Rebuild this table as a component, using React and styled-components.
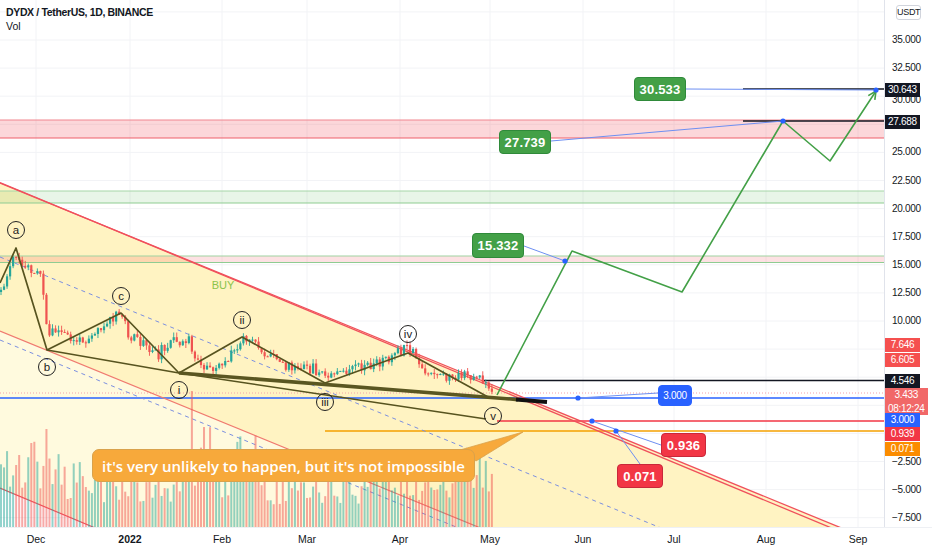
import React from 'react';
import styled, { createGlobalStyle } from 'styled-components';

const PLOT_W = 884;
const PLOT_H = 527;
const STEP = 3.03;

const priceY = (p) => 40 + (35 - p) * 11.24;

const GlobalStyle = createGlobalStyle`
  html, body {
    margin: 0;
    padding: 0;
    background: #ffffff;
  }
  body {
    font-family: "Liberation Sans", Arial, sans-serif;
    color: #131722;
  }
`;

const Frame = styled.div`
  width: 932px;
  height: 550px;
  display: flex;
  flex-direction: column;
  overflow: hidden;
  background: #fff;
`;

const ChartRow = styled.div`
  display: flex;
  height: ${PLOT_H}px;
`;

const Plot = styled.div`
  position: relative;
  width: ${PLOT_W}px;
  height: 100%;
  overflow: hidden;
`;

const Canvas = styled.svg`
  display: block;
`;

const Legend = styled.div`
  position: absolute;
  top: 6px;
  left: 6px;
  display: flex;
  flex-direction: column;
  gap: 1px;
  font-size: 10.5px;
  line-height: 13px;
  color: #131722;
`;

const LegendTitle = styled.span`
  font-weight: 700;
  letter-spacing: -0.35px;
`;

const Badge = styled.div`
  position: absolute;
  box-sizing: border-box;
  display: flex;
  align-items: center;
  justify-content: center;
  border-radius: 4px;
  color: #fff;
  font-weight: ${(p) => (p.$thin ? 400 : 700)};
  font-size: ${(p) => (p.$thin ? '10px' : '13px')};
  background: ${(p) => p.$bg};
  border: 1px solid ${(p) => p.$edge};
  letter-spacing: ${(p) => (p.$thin ? '-0.3px' : '0.2px')};
`;

const Callout = styled.div`
  position: absolute;
  left: 92px;
  top: 449px;
  width: 383px;
  height: 33px;
  box-sizing: border-box;
  display: flex;
  align-items: center;
  justify-content: center;
  background: #f7a93b;
  border: 1px solid #d9a24c;
  border-radius: 7px;
  color: #fff;
  font-family: "Open Sans", "Liberation Sans", sans-serif;
  font-size: 15px;
  font-weight: 600;
`;

const PriceAxis = styled.div`
  position: relative;
  flex: 1;
  border-left: 1px solid #e0e3eb;
  font-size: 10px;
  letter-spacing: -0.3px;
`;

const Tick = styled.span`
  position: absolute;
  left: 7px;
  line-height: 12px;
  transform: translateY(-50%);
  color: #131722;
`;

const AxisTag = styled.div`
  position: absolute;
  left: 0;
  box-sizing: border-box;
  padding: 0 3px;
  min-width: 35px;
  line-height: 13.5px;
  color: #fff;
  text-align: center;
  background: ${(p) => p.$bg};
`;

const UnitButton = styled.div`
  position: absolute;
  top: 5px;
  left: 11px;
  width: 25px;
  height: 15px;
  box-sizing: border-box;
  border: 1px solid #d1d4dc;
  border-radius: 3px;
  background: #fff;
  font-size: 9px;
  line-height: 13px;
  text-align: center;
  color: #131722;
`;

const TimeAxis = styled.div`
  position: relative;
  flex: 1;
  border-top: 1px solid #eef0f4;
  font-size: 10.5px;
`;

const TimeTick = styled.span`
  position: absolute;
  top: 5px;
  transform: translateX(-50%);
  font-weight: ${(p) => (p.$strong ? 700 : 400)};
  color: #131722;
`;

// ---- data ----

function seeded(seed) {
  let a = seed;
  return () => {
    a = (a + 0x6d2b79f5) | 0;
    let t = Math.imul(a ^ (a >>> 15), 1 | a);
    t = (t + Math.imul(t ^ (t >>> 7), 61 | t)) ^ t;
    return ((t ^ (t >>> 14)) >>> 0) / 4294967296;
  };
}

const pricePath = [
  [0, 292], [6, 278], [12, 262], [17, 255], [22, 268], [28, 262], [34, 275], [40, 268],
  [44, 300], [48, 340], [52, 330], [60, 332], [70, 338], [80, 342], [90, 335], [100, 328],
  [110, 322], [118, 315], [124, 318], [130, 338], [140, 342], [150, 350], [158, 355],
  [165, 345], [172, 340], [180, 348], [186, 342], [190, 333], [194, 362], [205, 368],
  [215, 366], [225, 362], [235, 352], [242, 340], [250, 342], [260, 350], [272, 358],
  [285, 365], [300, 370], [312, 368], [325, 378], [335, 376], [350, 370], [365, 368],
  [380, 362], [395, 355], [405, 350], [412, 352], [420, 366], [430, 376], [445, 377],
  [460, 377], [475, 376], [482, 380], [488, 392], [495, 392],
];

function along(x) {
  for (let i = 1; i < pricePath.length; i++) {
    const [x1, y1] = pricePath[i];
    const [x0, y0] = pricePath[i - 1];
    if (x <= x1) return y0 + ((y1 - y0) * (x - x0)) / (x1 - x0);
  }
  return pricePath[pricePath.length - 1][1];
}

function volumeBase(x) {
  if (x < 20) return 80;
  if (x < 60) return 90;
  if (x < 120) return 62;
  if (x < 185) return 55;
  if (x < 215) return 100;
  if (x < 235) return 62;
  if (x < 260) return 92;
  if (x < 370) return 55;
  if (x < 410) return 78;
  if (x < 470) return 55;
  return 78;
}

function buildCandles() {
  const rnd = seeded(11);
  const list = [];
  let prev = along(0);
  for (let i = 0; i < 163; i++) {
    const x = 1 + i * STEP;
    const close = along(x) + (rnd() - 0.5) * 11;
    const open = prev;
    const top = Math.min(open, close) - rnd() * 5;
    const bottom = Math.max(open, close) + rnd() * 5;
    let vol = volumeBase(x) * (0.4 + 0.65 * rnd());
    if (Math.abs(x - 192) < 1.6) vol = 136;
    if (Math.abs(x - 46) < 1.6) vol = 98;
    list.push({ x, open, close, top, bottom, rise: close < open, vol });
    prev = close;
  }
  return list;
}

const candles = buildCandles();

// labels that sit under a price tag or the unit button are left out
const priceTicks = [35, 32.5, 30, 25, 22.5, 20, 17.5, 15, 12.5, 10, -2.5, -5, -7.5];
const gridPrices = [37.5, 35, 32.5, 30, 27.5, 25, 22.5, 20, 17.5, 15, 12.5, 10, 7.5, 5, 2.5, 0, -2.5, -5, -7.5];

const fmt = (p) => {
  const txt = Math.abs(p).toFixed(3);
  return p < 0 ? `\u2212${txt}` : txt;
};

const axisTags = [
  { top: 83, bg: '#131722', text: ['30.643'] },
  { top: 115, bg: '#131722', text: ['27.688'] },
  { top: 338, bg: '#f5504f', text: ['7.646'] },
  { top: 353, bg: '#f5504f', text: ['6.605'] },
  { top: 374, bg: '#131722', text: ['4.546'] },
  { top: 388, bg: '#f16868', text: ['3.433', '08:12:24'] },
  { top: 413, bg: '#2962ff', text: ['3.000'] },
  { top: 427, bg: '#f23645', text: ['0.939'] },
  { top: 442, bg: '#fb8c00', text: ['0.071'] },
];

const months = [
  { x: 36, label: 'Dec' },
  { x: 130, label: '2022', strong: true },
  { x: 222, label: 'Feb' },
  { x: 307, label: 'Mar' },
  { x: 400, label: 'Apr' },
  { x: 490, label: 'May' },
  { x: 583, label: 'Jun' },
  { x: 674, label: 'Jul' },
  { x: 766, label: 'Aug' },
  { x: 858, label: 'Sep' },
];

const waveMarks = [
  { x: 16, y: 230, t: 'a' },
  { x: 47, y: 367, t: 'b' },
  { x: 121, y: 296, t: 'c' },
  { x: 179, y: 390, t: 'i' },
  { x: 242, y: 320, t: 'ii' },
  { x: 325, y: 402, t: 'iii' },
  { x: 408, y: 334, t: 'iv' },
  { x: 493, y: 416, t: 'v' },
];

const badges = [
  { left: 634, top: 77, w: 52, h: 24, bg: '#43a047', edge: '#2f8a3a', text: '30.533' },
  { left: 499, top: 130, w: 52, h: 24, bg: '#43a047', edge: '#2f8a3a', text: '27.739' },
  { left: 472, top: 233, w: 52, h: 25, bg: '#43a047', edge: '#2f8a3a', text: '15.332' },
  { left: 658, top: 385, w: 34, h: 21, bg: '#2962ff', edge: '#2962ff', text: '3.000', thin: true },
  { left: 661, top: 433, w: 45, h: 24, bg: '#f23645', edge: '#c9283a', text: '0.936' },
  { left: 617, top: 464, w: 46, h: 24, bg: '#f23645', edge: '#c9283a', text: '0.071' },
];

const pointers = [
  [686, 89, 876, 90],
  [551, 141, 783, 121],
  [524, 246, 565, 261],
  [578, 398, 658, 393],
  [592, 421, 661, 445],
  [616, 431, 640, 464],
];

const anchors = [[876, 90], [783, 121], [565, 261], [578, 398], [592, 421], [616, 431]];

const projection = [[497, 395], [572, 251], [682, 292], [783, 121], [830, 161], [876, 91]];

const lineY = (y0, slope) => `M0 ${y0} L${PLOT_W} ${y0 + slope * PLOT_W}`;

function arrowHead([x0, y0], [x1, y1], len = 9) {
  const a = Math.atan2(y1 - y0, x1 - x0);
  const l = [x1 - len * Math.cos(a - 0.45), y1 - len * Math.sin(a - 0.45)];
  const r = [x1 - len * Math.cos(a + 0.45), y1 - len * Math.sin(a + 0.45)];
  return `M${l[0]} ${l[1]} L${x1} ${y1} L${r[0]} ${r[1]}`;
}

function ChartDrawing() {
  const wave = 'M0 283 L16 248 L47 350 L121 313 L179 373 L242 337 L325 383 L408 353 L488 397';
  const proj = projection.map((p, i) => `${i ? 'L' : 'M'}${p[0]} ${p[1]}`).join(' ');
  return (
    <Canvas width={PLOT_W} height={PLOT_H} viewBox={`0 0 ${PLOT_W} ${PLOT_H}`}>
      {gridPrices.map((p) => (
        <line key={p} x1="0" x2={PLOT_W} y1={priceY(p)} y2={priceY(p)} stroke="#f2f3f6" />
      ))}
      {months.map((m) => (
        <line key={m.label} x1={m.x} x2={m.x} y1="0" y2={PLOT_H} stroke="#f2f3f6" />
      ))}

      {/* channels */}
      <polygon points="0,183 839,527 95,527 0,488" fill="#fffade" />
      <polygon points="0,183 839,527 478,527 0,331" fill="#fff3c2" />

      {/* zones */}
      <rect x="0" y="120" width={PLOT_W} height="18" fill="rgba(242,54,69,0.2)" />
      <line x1="0" x2={PLOT_W} y1="120" y2="120" stroke="#f0868f" />
      <line x1="0" x2={PLOT_W} y1="138" y2="138" stroke="#ef5f6b" />
      <rect x="0" y="191" width={PLOT_W} height="12" fill="rgba(76,175,80,0.13)" />
      <line x1="0" x2={PLOT_W} y1="191" y2="191" stroke="#a5d6a7" />
      <line x1="0" x2={PLOT_W} y1="203" y2="203" stroke="#8fcc92" />
      <rect x="0" y="256" width={PLOT_W} height="6.5" fill="rgba(242,54,69,0.15)" />
      <line x1="0" x2={PLOT_W} y1="256" y2="256" stroke="#9fd3a1" />
      <line x1="0" x2={PLOT_W} y1="262.5" y2="262.5" stroke="#8fcc92" />

      {/* level lines */}
      <line x1="0" x2={PLOT_W} y1="393" y2="393" stroke="#f4a3aa" strokeDasharray="1 2" />
      <line x1="0" x2={PLOT_W} y1="398" y2="398" stroke="#2962ff" strokeWidth="1.5" />
      <line x1="743" x2={PLOT_W} y1="89" y2="89" stroke="#131722" strokeWidth="1.5" />
      <line x1="743" x2={PLOT_W} y1="121" y2="121" stroke="#131722" strokeWidth="1.5" />
      <line x1="484" x2={PLOT_W} y1="380.5" y2="380.5" stroke="#131722" strokeWidth="1.4" />
      <line x1="497" x2={PLOT_W} y1="421" y2="421" stroke="#f23645" strokeWidth="1.4" />
      <line x1="325" x2={PLOT_W} y1="431" y2="431" stroke="#f5a000" strokeWidth="1.4" />

      {/* channel borders */}
      <path d={lineY(257, 0.41)} stroke="#7b8fe0" strokeDasharray="4 4" fill="none" />
      <path d={lineY(340, 0.41)} stroke="#7b8fe0" strokeDasharray="4 4" fill="none" />
      <path d={lineY(183, 0.41)} stroke="#f0505c" strokeWidth="1.3" fill="none" />
      <path d={lineY(182.5, 0.4155)} stroke="#f0505c" strokeWidth="1.3" fill="none" />
      <path d={lineY(331, 0.41)} stroke="#f07a70" strokeWidth="1.2" fill="none" />
      <path d={lineY(488, 0.42)} stroke="#f0505c" strokeWidth="1.2" fill="none" />

      {/* volume */}
      {candles.map((c) => (
        <rect
          key={`v${c.x}`}
          x={c.x - 1}
          y={PLOT_H - c.vol}
          width="2"
          height={c.vol}
          fill={c.rise ? '#26a69a' : '#ef5350'}
          opacity="0.5"
        />
      ))}

      {/* candles */}
      {candles.map((c) => {
        const color = c.rise ? '#26a69a' : '#ef5350';
        const bodyTop = Math.min(c.open, c.close);
        const bodyH = Math.max(1, Math.abs(c.open - c.close));
        return (
          <g key={`c${c.x}`}>
            <line x1={c.x} x2={c.x} y1={c.top} y2={c.bottom} stroke={color} strokeWidth="0.9" />
            <rect x={c.x - 1.1} y={bodyTop} width="2.2" height={bodyH} fill={color} />
          </g>
        );
      })}

      {/* elliott waves */}
      <path d={wave} stroke="#57531f" strokeWidth="1.7" fill="none" strokeLinejoin="round" />
      <path d="M47 350 L179 373" stroke="#57531f" strokeWidth="1.7" fill="none" />
      <path d="M179 373 L486 419" stroke="#57531f" strokeWidth="1.5" fill="none" />
      <path d="M179 373 L518 399.6" stroke="#5a5621" strokeWidth="3.6" fill="none" />
      <path d="M516 399.4 L547 402" stroke="#111" strokeWidth="4" fill="none" />

      {waveMarks.map((m) => (
        <g key={m.t}>
          <circle cx={m.x} cy={m.y} r="8.5" fill="none" stroke="#222" strokeWidth="1" />
          <text
            x={m.x}
            y={m.y + 3.8}
            textAnchor="middle"
            fontSize="11.5"
            fontFamily="Liberation Sans, sans-serif"
            fill="#222"
          >
            {m.t}
          </text>
        </g>
      ))}
      <text x="223" y="289" textAnchor="middle" fontSize="11" fontFamily="Liberation Sans, sans-serif" fill="#8bc34a">
        BUY
      </text>

      {/* projection */}
      <path d={proj} stroke="#43a047" strokeWidth="1.6" fill="none" strokeLinejoin="round" />
      <path d={arrowHead(projection[4], projection[5])} stroke="#43a047" strokeWidth="1.6" fill="none" />

      {/* callout tail */}
      <polygon points="460,450 523,432 476,461" fill="#f7a93b" stroke="#d9a24c" strokeWidth="0.8" />

      {/* pointers */}
      {pointers.map(([x1, y1, x2, y2]) => (
        <line key={`${x1}-${y1}`} x1={x1} y1={y1} x2={x2} y2={y2} stroke="#6d8ff2" strokeWidth="1" />
      ))}
      {anchors.map(([x, y]) => (
        <circle key={`${x}:${y}`} cx={x} cy={y} r="2.6" fill="#2962ff" />
      ))}
    </Canvas>
  );
}

export default function App() {
  return (
    <>
      <GlobalStyle />
      <Frame>
        <ChartRow>
          <Plot>
            <ChartDrawing />
            <Legend>
              <LegendTitle>DYDX / TetherUS, 1D, BINANCE</LegendTitle>
              <span>Vol</span>
            </Legend>
            {badges.map((b) => (
              <Badge
                key={b.text + b.left}
                $bg={b.bg}
                $edge={b.edge}
                $thin={b.thin}
                style={{ left: b.left, top: b.top, width: b.w, height: b.h }}
              >
                {b.text}
              </Badge>
            ))}
            <Callout>it's very unlikely to happen, but it's not impossible</Callout>
          </Plot>
          <PriceAxis>
            {priceTicks.map((p) => (
              <Tick key={p} style={{ top: priceY(p) + (p === 30 ? 4 : 0) }}>
                {fmt(p)}
              </Tick>
            ))}
            {axisTags.map((t) => (
              <AxisTag key={t.top} $bg={t.bg} style={{ top: t.top }}>
                {t.text.map((line) => (
                  <div key={line}>{line}</div>
                ))}
              </AxisTag>
            ))}
            <UnitButton>USDT</UnitButton>
          </PriceAxis>
        </ChartRow>
        <TimeAxis>
          {months.map((m) => (
            <TimeTick key={m.label} $strong={m.strong} style={{ left: m.x }}>
              {m.label}
            </TimeTick>
          ))}
        </TimeAxis>
      </Frame>
    </>
  );
}
